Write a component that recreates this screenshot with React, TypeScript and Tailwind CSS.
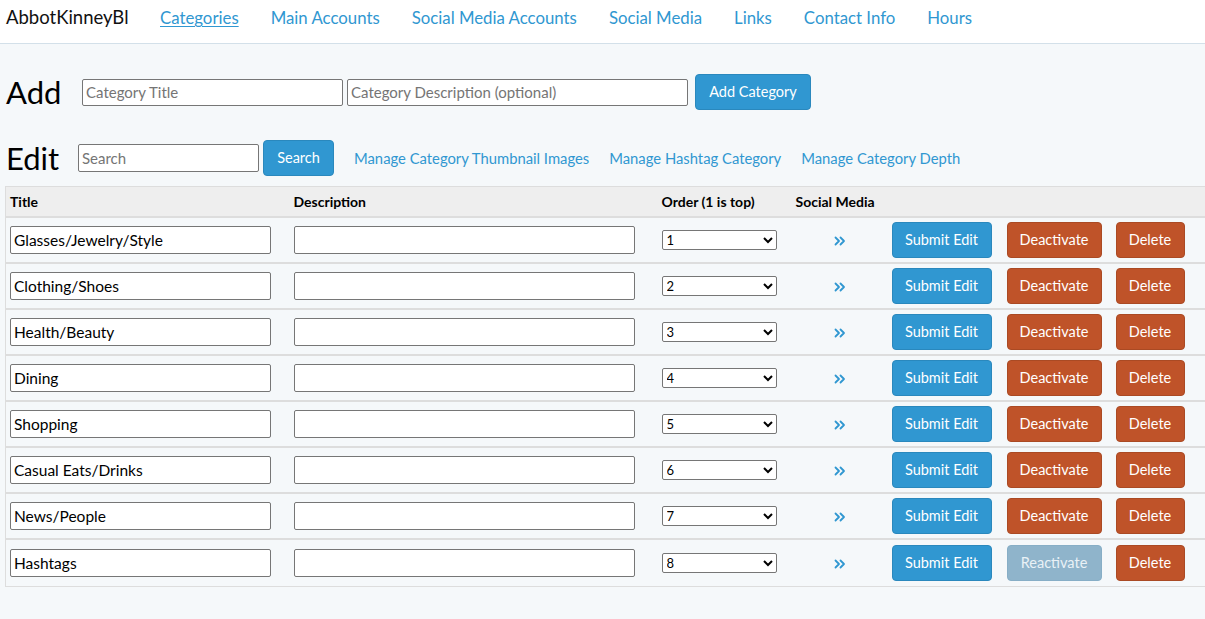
import React from "react";

const rows = [
  { title: "Glasses/Jewelry/Style", order: 1, active: true },
  { title: "Clothing/Shoes", order: 2, active: true },
  { title: "Health/Beauty", order: 3, active: true },
  { title: "Dining", order: 4, active: true },
  { title: "Shopping", order: 5, active: true },
  { title: "Casual Eats/Drinks", order: 6, active: true },
  { title: "News/People", order: 7, active: true },
  { title: "Hashtags", order: 8, active: false },
];

const navLinks = [
  "Categories",
  "Main Accounts",
  "Social Media Accounts",
  "Social Media",
  "Links",
  "Contact Info",
  "Hours",
];

function DoubleChevron() {
  return (
    <svg width="12" height="10" viewBox="0 0 12 10" fill="none">
      <path d="M1.5 1.5 L5 5 L1.5 8.5" stroke="#3097d1" strokeWidth="1.8" strokeLinecap="round" strokeLinejoin="round" />
      <path d="M6.5 1.5 L10 5 L6.5 8.5" stroke="#3097d1" strokeWidth="1.8" strokeLinecap="round" strokeLinejoin="round" />
    </svg>
  );
}

export default function App() {
  return (
    <div
      className="min-h-screen w-full overflow-x-hidden bg-[#f5f8fa] text-[#000]"
      style={{ fontFamily: "Lato, 'Open Sans', sans-serif" }}
    >
      <nav className="flex h-[44px] items-center border-b border-[#d3e0e9] bg-white">
        <div className="w-[144px] pb-[7px] pl-[6px] text-[18.5px] text-[#111]">AbbotKinneyBl</div>
        <ul className="flex items-center pb-[7px]">
          {navLinks.map((l, i) => (
            <li key={l} className="px-[16px] text-[16.8px] text-[#3097d1]">
              <span className={i === 0 ? "underline underline-offset-2" : ""}>{l}</span>
            </li>
          ))}
        </ul>
      </nav>

      <div className="flex items-center pl-[6px] pt-[30px]">
        <h2 className="w-[76px] text-[31px] leading-none">Add</h2>
        <input
          className="h-[27px] w-[261px] rounded-[2px] border border-[#767676] bg-white px-[3px] text-[15px] placeholder:text-[#757575]"
          placeholder="Category Title"
        />
        <input
          className="ml-[4px] h-[27px] w-[341px] rounded-[2px] border border-[#767676] bg-white px-[3px] text-[15px] placeholder:text-[#757575]"
          placeholder="Category Description (optional)"
        />
        <button className="ml-[7px] h-[36px] w-[116px] rounded-[4px] border border-[#2a88bd] bg-[#3097d1] text-[14.5px] text-white">
          Add Category
        </button>
      </div>

      <div className="mt-[30px] flex items-center pl-[6px]">
        <h2 className="w-[72px] text-[31px] leading-none">Edit</h2>
        <input
          className="h-[28px] w-[181px] rounded-[2px] border border-[#767676] bg-white px-[3px] text-[15px] placeholder:text-[#757575]"
          placeholder="Search"
        />
        <button className="ml-[4px] h-[36px] w-[71px] rounded-[4px] border border-[#2a88bd] bg-[#3097d1] text-[14.5px] text-white">
          Search
        </button>
        <div className="ml-[20px] flex gap-[20px] text-[14.8px] text-[#3097d1]">
          <span>Manage Category Thumbnail Images</span>
          <span>Manage Hashtag Category</span>
          <span>Manage Category Depth</span>
        </div>
      </div>

      <div className="mt-[10px] pl-[5px]">
        <table className="w-[1215px] border-collapse border border-[#dddddd] text-[14px]">
          <thead>
            <tr className="h-[30px] bg-[#eeeeee] text-left">
              <th className="w-[284px] px-[4px] font-bold">Title</th>
              <th className="w-[368px] px-[4px] font-bold">Description</th>
              <th className="w-[134px] px-[4px] font-bold">Order (1 is top)</th>
              <th className="w-[96px] px-[4px] font-bold">Social Media</th>
              <th className="px-[4px]"></th>
            </tr>
          </thead>
          <tbody>
            {rows.map((r, idx) => (
              <tr
                key={r.title}
                className={`border-t-2 border-[#dddddd] ${idx === rows.length - 1 ? "h-[48px]" : "h-[46px]"}`}
              >
                <td className="px-[4px]">
                  <input
                    className="h-[28px] w-[261px] rounded-[2px] border border-[#767676] bg-white px-[3px] text-[15.5px]"
                    defaultValue={r.title}
                  />
                </td>
                <td className="px-[4px]">
                  <input className="h-[28px] w-[341px] rounded-[2px] border border-[#767676] bg-white px-[3px] text-[15px]" />
                </td>
                <td className="px-[4px]">
                  <select
                    className="h-[20px] w-[115px] rounded-[2px] border border-[#767676] bg-white text-[13px]"
                    defaultValue={r.order}
                  >
                    {rows.map((o) => (
                      <option key={o.order} value={o.order}>
                        {o.order}
                      </option>
                    ))}
                  </select>
                </td>
                <td className="px-[4px]">
                  <div className="flex justify-center pt-[2px]">
                    <DoubleChevron />
                  </div>
                </td>
                <td className="px-[4px]">
                  <div className="flex items-center">
                    <button className="h-[36px] w-[100px] rounded-[4px] border border-[#2a88bd] bg-[#3097d1] text-[14.5px] text-white">
                      Submit Edit
                    </button>
                    {r.active ? (
                      <button className="ml-[15px] h-[36px] w-[95px] rounded-[4px] border border-[#aa4a24] bg-[#bf5329] text-[14.5px] text-white">
                        Deactivate
                      </button>
                    ) : (
                      <button className="ml-[15px] h-[36px] w-[95px] rounded-[4px] border border-[#87aec6] bg-[#8fb4cb] text-[14.5px] text-[#e9f1f6]">
                        Reactivate
                      </button>
                    )}
                    <button className="ml-[14px] h-[36px] w-[69px] rounded-[4px] border border-[#aa4a24] bg-[#bf5329] text-[14.5px] text-white">
                      Delete
                    </button>
                  </div>
                </td>
              </tr>
            ))}
          </tbody>
        </table>
      </div>
    </div>
  );
}
